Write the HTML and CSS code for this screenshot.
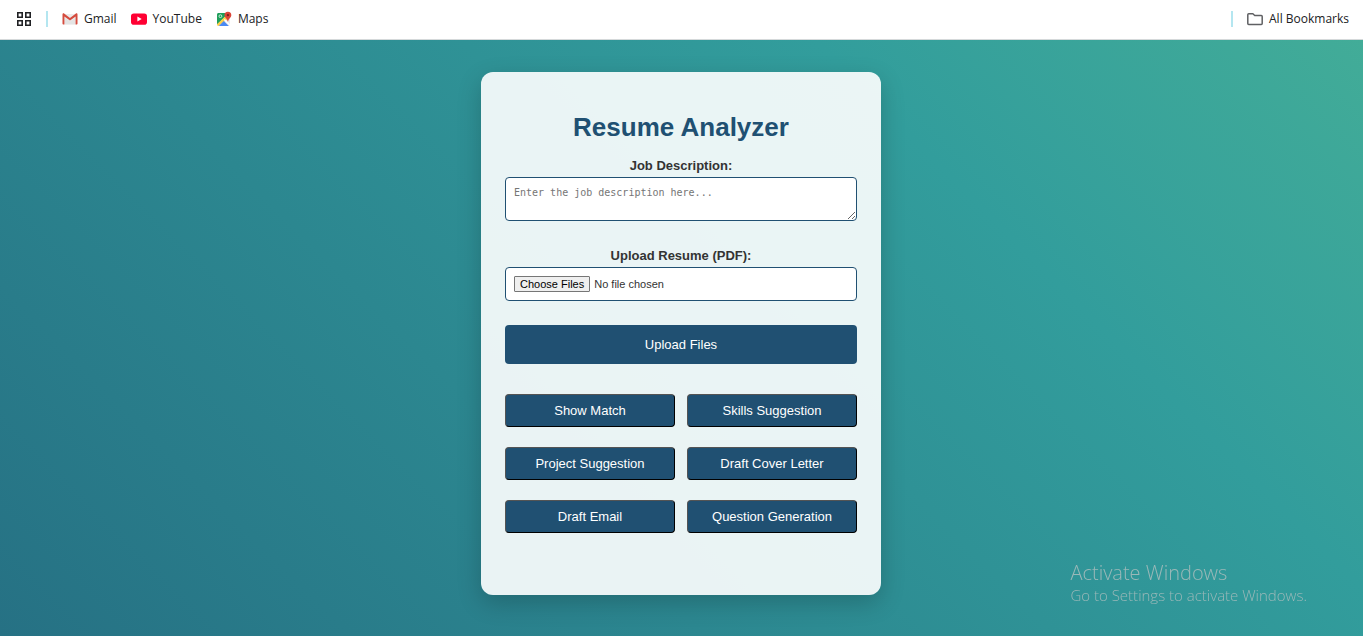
FILE: index.html
```html
<!DOCTYPE html>
<html lang="en">
<head>
<meta charset="utf-8">
<title>Resume Analyzer</title>
<link rel="stylesheet" href="styles.css">
</head>
<body>
<nav class="bookmarks" aria-label="Bookmarks">
  <button class="apps" type="button" aria-label="Apps">
    <svg width="16" height="16" viewBox="0 0 16 16" fill="none" stroke="#202124" stroke-width="1.6"><path d="M1.800 1.800h4.400v4.400H1.800zM9.800 1.800h4.400v4.400H9.800zM1.800 9.800h4.400v4.400H1.800zM9.800 9.800h4.400v4.400H9.800z"/></svg>
  </button>
  <span class="divider"></span>
  <a class="bookmark" href="#gmail">
    <svg width="16" height="16" viewBox="0 0 16 16"><path fill="#ececec" d="M2 3h12v10.500H2z"/><path fill="#d9d9d9" d="M3 13.500V7l5 3.500L13 7v6.500z" opacity=".4"/><path fill="#d54c3f" d="M.5 3.500C.5 2.500 1.500 2 2.400 2.700L8 7l5.600-4.300c.9-.7 1.900-.2 1.900.8V12.500c0 .6-.4 1-1 1h-.900V5.500L8 9.500 2.400 5.500v8H1.500c-.6 0-1-.4-1-1z"/></svg>
    <span>Gmail</span>
  </a>
  <a class="bookmark" href="#youtube">
    <svg width="16" height="16" viewBox="0 0 16 16"><rect y="2.500" width="16" height="11.200" rx="2.800" fill="#ff0033"/><path fill="#fff" d="M6.400 5.600v5l4.300-2.500z"/></svg>
    <span>YouTube</span>
  </a>
  <a class="bookmark" href="#maps">
    <svg width="16" height="16" viewBox="0 0 16 16"><rect x="1" y="2" width="13" height="13" rx="1.500" fill="#e8eaed"/><path fill="#1e9e5a" d="M2.500 2H9v4L1 13.500v-10C1 2.700 1.700 2 2.500 2z"/><path fill="#fdd049" d="M1 13.300 9.500 5l2 3-8.800 7H2.500c-.8 0-1.500-.7-1.500-1.700z"/><path fill="#4a89f3" d="M2.800 15 7.800 10l5 5z"/><path fill="#fff" d="m7.800 9 5.900 5.700.5-.9L8.800 8z"/><circle cx="4.400" cy="5.200" r="1.400" fill="none" stroke="#d9f0e3" stroke-width=".9"/><path fill="#db4437" d="M11.900.7a3.400 3.400 0 0 1 3.400 3.500c0 2.300-2.600 3.200-3.200 6.300h-.4c-.6-3.100-3.200-4-3.200-6.300A3.400 3.400 0 0 1 11.900.7z"/><circle cx="11.900" cy="4.100" r="1.200" fill="#7b231c"/></svg>
    <span>Maps</span>
  </a>
  <span class="divider divider-end"></span>
  <a class="bookmark" href="#all">
    <svg width="16" height="16" viewBox="0 0 16 16" fill="none" stroke="#5f6063" stroke-width="1.500" stroke-linejoin="round"><path d="M.8 3.700c0-.5.400-.9.900-.9h4.200l1.800 1.700h6.600c.5 0 .9.400.9.900v7.200c0 .5-.4.900-.9.900H1.700c-.5 0-.9-.4-.9-.9z"/></svg>
    <span>All Bookmarks</span>
  </a>
</nav>
<main class="page">
  <section class="card">
    <h1 class="title">Resume Analyzer</h1>
    <form class="form">
      <div class="field">
        <label class="label" for="job">Job Description:</label>
        <textarea class="control description" id="job" placeholder="Enter the job description here..."></textarea>
      </div>
      <div class="field">
        <label class="label" for="resume">Upload Resume (PDF):</label>
        <input class="control file" id="resume" type="file" accept=".pdf" multiple>
      </div>
      <button class="upload" type="button">Upload Files</button>
    </form>
    <div class="actions">
      <button class="action" type="button">Show Match</button>
      <button class="action" type="button">Skills Suggestion</button>
      <button class="action" type="button">Project Suggestion</button>
      <button class="action" type="button">Draft Cover Letter</button>
      <button class="action" type="button">Draft Email</button>
      <button class="action" type="button">Question Generation</button>
    </div>
  </section>
</main>
<aside class="watermark">
  <p class="watermark-title">Activate Windows</p>
  <p class="watermark-text">Go to Settings to activate Windows.</p>
</aside>
</body>
</html>
```
FILE: styles.css
```css
* {
  box-sizing: border-box;
}

body {
  margin: 0;
  min-height: 100vh;
  display: flex;
  flex-direction: column;
  font-family: "Liberation Sans", Arial, sans-serif;
  color: #333;
}

.bookmarks {
  display: flex;
  align-items: center;
  gap: 14px;
  height: 40px;
  padding: 0 14px 2px 16px;
  background: #fff;
  border-bottom: 1px solid #d5d9da;
  font: 12px/16px "Open Sans", sans-serif;
}

.apps {
  display: flex;
  padding: 0;
  border: 0;
  background: none;
}

.divider {
  width: 2px;
  height: 16px;
  background: #b4e6f0;
}

.divider-end {
  margin-left: auto;
}

.bookmark {
  display: flex;
  align-items: center;
  gap: 6px;
  color: #202124;
  text-decoration: none;
}

.page {
  flex: 1;
  display: flex;
  justify-content: center;
  align-items: flex-start;
  padding: 32px 17px 40px 16px;
  background: linear-gradient(45deg, #267184, #329d9c 72%, #42ac98);
}

.card {
  width: 100%;
  max-width: 400px;
  padding: 40px 24px 62px;
  border-radius: 12px;
  background: rgba(255, 255, 255, 0.9);
  box-shadow: 0 8px 24px rgba(0, 0, 0, 0.2);
  text-align: center;
}

.title {
  margin: 0 0 16px;
  font-size: 26px;
  line-height: 30px;
  color: #205072;
}

.form {
  display: flex;
  flex-direction: column;
  gap: 24px;
}

.field {
  display: flex;
  flex-direction: column;
  gap: 4px;
}

.label {
  font-size: 13px;
  line-height: 15px;
  font-weight: bold;
}

.control {
  width: 100%;
  padding: 8px;
  border: 1px solid #205072;
  border-radius: 4px;
  background: #fff;
}

.description {
  height: 44px;
  margin-bottom: 3px;
  font: 10px/14px "DejaVu Sans Mono", monospace;
  resize: vertical;
}

.file {
  height: 34px;
  font: 11px/16px "Liberation Sans", Arial, sans-serif;
}

.file::file-selector-button {
  height: 16px;
  margin: 0 4px 0 0;
  padding: 0 5px;
  border: 1px solid #767676;
  border-radius: 1px;
  background: #efefef;
  color: #000;
  font: inherit;
  line-height: 14px;
}

.upload,
.action {
  background: #205072;
  color: #fff;
  border-radius: 4px;
  font: 13px/15px "Liberation Sans", Arial, sans-serif;
}

.upload {
  padding: 12px;
  border: 0;
}

.actions {
  display: grid;
  grid-template-columns: 1fr 1fr;
  gap: 20px 12px;
  margin-top: 30px;
}

.action {
  padding: 8px 4px;
  border: 1px outset #000;
}

.watermark {
  position: fixed;
  right: 56px;
  bottom: 31px;
  color: #9ab8b8;
  font-family: "Open Sans", sans-serif;
  font-weight: 300;
}

.watermark-title {
  margin: 0;
  font-size: 20px;
  line-height: 24px;
}

.watermark-text {
  margin: 0;
  font-size: 15px;
  line-height: 20px;
}
```
